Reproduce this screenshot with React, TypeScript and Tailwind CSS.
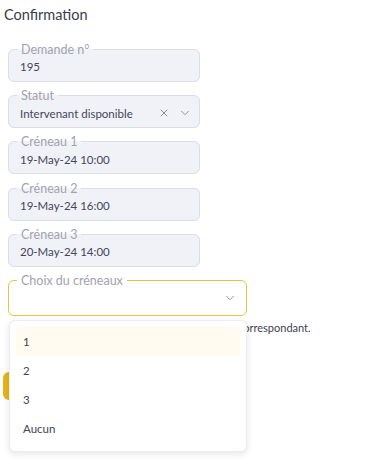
import { X, ChevronDown } from "lucide-react"

const slots = [
  { label: "Créneau 1", value: "19-May-24 10:00" },
  { label: "Créneau 2", value: "19-May-24 16:00" },
  { label: "Créneau 3", value: "20-May-24 14:00" },
]

function Field({ label, children }: { label: string; children: React.ReactNode }) {
  return (
    <fieldset className="w-[192px] rounded-md border border-[#dcdde6] bg-[#f1f2f8] px-2 pb-[1px]">
      <legend className="px-1 text-[12.5px] leading-[13px] text-[#a2a2ae]">{label}</legend>
      <div className="flex h-[24px] items-center pb-[2px] pl-[3px] text-[11.5px] text-[#434658]">{children}</div>
    </fieldset>
  )
}

export default function App() {
  const options = ["1", "2", "3", "Aucun"]

  return (
    <div className="relative h-[464px] w-[389px] bg-white font-['Lato',sans-serif] text-[#434658]">
      <h2 className="px-1 pt-[5px] text-[14.5px] leading-[20px] text-[#3a3c4c]">Confirmation</h2>

      <div className="mt-[18px] flex flex-col gap-[7.2px] pl-2">
        <Field label="Demande n°">195</Field>
        <Field label="Statut">
          <span className="flex-1">Intervenant disponible</span>
          <X className="mr-[8px] h-[12px] w-[12px] text-[#6b6e7e]" strokeWidth={1.6} />
          <ChevronDown className="mr-[-1px] h-[14px] w-[14px] text-[#8a8d9c]" strokeWidth={1.6} />
        </Field>
        {slots.map((s) => (
          <Field key={s.label} label={s.label}>
            {s.value}
          </Field>
        ))}

        <fieldset className="w-[239px] rounded-md border-[1.5px] border-[#e6c43f] bg-white px-2">
          <legend className="px-1 text-[12.5px] leading-[13px] text-[#a2a2ae]">Choix du créneaux</legend>
          <div className="flex h-[28px] items-center justify-end pb-[5px] pr-[1px]">
            <ChevronDown className="h-[14px] w-[14px] text-[#8a8d9c]" strokeWidth={1.6} />
          </div>
        </fieldset>
      </div>

      <p className="mt-[5px] pl-[12px] text-[11px] leading-[14px] text-[#3d4052]">
        Veuillez choisir le créneau retenu avec le client correspondant.
      </p>

      <button className="ml-[3px] mt-[37px] h-[28px] rounded-md bg-[#e3b516] px-4 text-[12px] text-white">
        Valider
      </button>

      <div className="absolute left-[9px] top-[320px] w-[238px] rounded-md border border-[#ececf1] bg-white py-[6px] shadow-[0_2px_6px_rgba(40,40,70,0.12)]">
        {options.map((o, i) => (
          <div
            key={o}
            className={`mx-[5px] flex h-[29px] items-center rounded-md px-[8px] text-[11.5px] text-[#43454f] ${
              i === 0 ? "bg-[#fffbf1]" : ""
            }`}
          >
            {o}
          </div>
        ))}
        <div className="h-[2px]" />
      </div>
    </div>
  )
}
